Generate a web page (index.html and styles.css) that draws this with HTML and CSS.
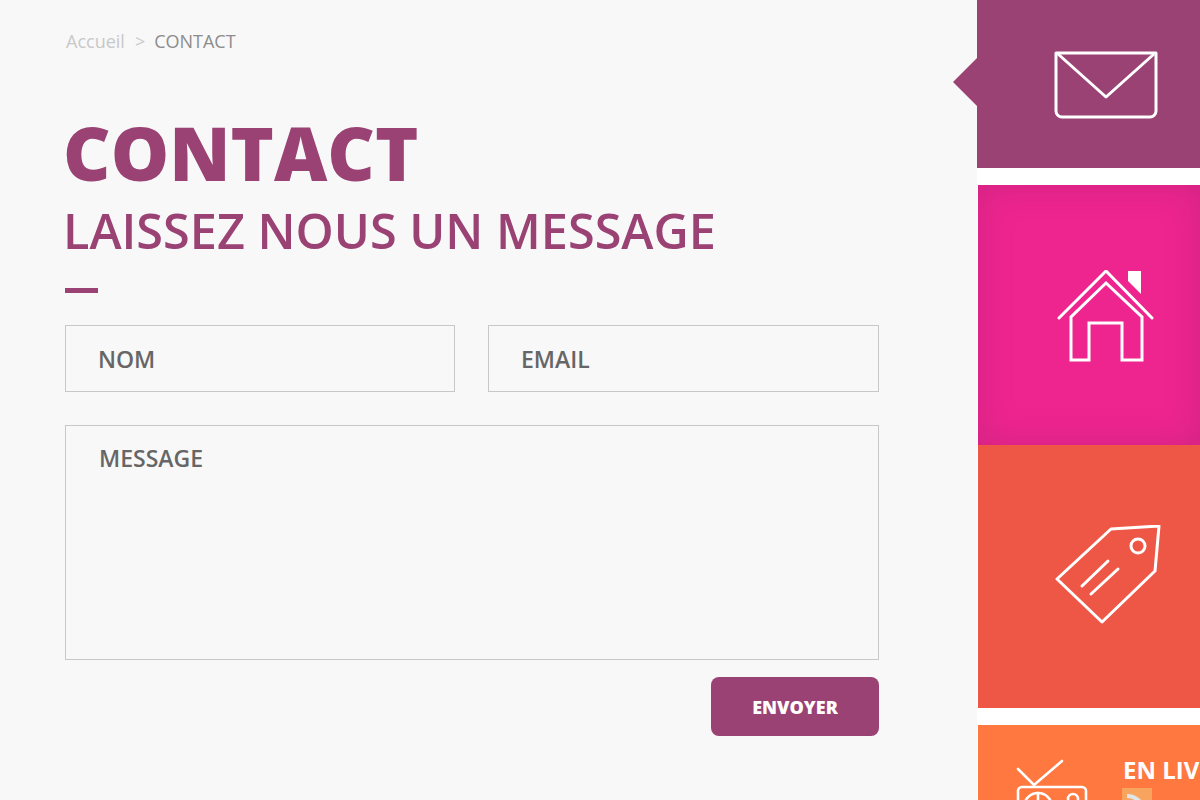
FILE: index.html
```html
<!DOCTYPE html>
<html lang="fr">
<head>
<meta charset="utf-8">
<title>Contact</title>
<link rel="stylesheet" href="styles.css">
</head>
<body>
<div class="page">
  <main class="main">
    <nav class="crumbs"><a class="crumb-link">Accueil</a><span class="crumb-sep">&gt;</span><span class="crumb-current">CONTACT</span></nav>
    <h1 class="title">CONTACT</h1>
    <h2 class="subtitle">LAISSEZ NOUS UN MESSAGE</h2>
    <div class="rule"></div>
    <form class="form">
      <div class="row">
        <input class="field" type="text" placeholder="NOM">
        <input class="field" type="text" placeholder="EMAIL">
      </div>
      <textarea class="field area" placeholder="MESSAGE"></textarea>
      <div class="actions"><button class="send" type="button">ENVOYER</button></div>
    </form>
  </main>
  <aside class="side">
    <div class="tile tile-mail">
      <svg class="icon" width="104" height="70" viewBox="0 0 104 70" fill="none" stroke="#fff" stroke-width="3" stroke-linejoin="round"><path d="M2 2H102V60a6 6 0 0 1-6 6H8a6 6 0 0 1-6-6Z"/><path d="M4 3 52 46 100 3"/></svg>
    </div>
    <div class="tile tile-home">
      <svg class="icon" width="100" height="94" viewBox="0 0 100 94" fill="none" stroke="#fff" stroke-width="3"><path d="M3 48 50 1 96 48" stroke-linecap="round"/><path d="M15 90V47L50 13 86 47V90H66V53H33V90Z"/><path d="M72 1H85V24L72 11Z" fill="#fff" stroke="none"/></svg>
    </div>
    <div class="tile tile-tag">
      <svg class="icon" width="106" height="100" viewBox="0 0 106 100" fill="none" stroke="#fff" stroke-width="3" stroke-linejoin="round" stroke-linecap="round"><path d="M2 54 56 4 104 1 100 46 47 97Z"/><circle cx="83" cy="21" r="7"/><path d="M27 61 53 36M36 69 63 44"/></svg>
    </div>
    <div class="tile tile-live">
      <svg class="tv" width="74" height="60" viewBox="0 0 74 60" fill="none" stroke="#fff" stroke-width="2.6" stroke-linecap="round"><path d="M3 9 19 25 47 1"/><rect x="3" y="27" width="68" height="40" rx="4"/><circle cx="23" cy="47" r="14"/><path d="M23 33V61"/><circle cx="58" cy="39" r="5"/></svg>
      <div class="live-text">
        <div class="live-title">EN LIVE</div>
        <div class="live-row">
          <svg class="rss" width="30" height="30" viewBox="0 0 30 30" fill="none"><rect width="30" height="30" fill="#f9a45e"/><path d="M5 8C14 8 22 15 22 25" stroke="#dfe6ea" stroke-width="4"/><path d="M5 14C11 14 16 19 16 25" stroke="#dfe6ea" stroke-width="3"/></svg>
        </div>
      </div>
    </div>
  </aside>
</div>
</body>
</html>
```
FILE: styles.css
```css
* { box-sizing: border-box; }
html, body { margin: 0; height: 100%; overflow: hidden; }
body { background: #f8f8f8; font-family: "Open Sans", sans-serif; }
.page { display: flex; height: 800px; }
.main { width: 977px; flex: none; padding: 31px 98px 0 65px; }
.crumbs { display: flex; font-size: 18px; line-height: 20px; }
.crumb-link { color: #c8c8c8; padding-left: 1px; }
.crumb-sep { color: #c8c8c8; margin: 0 10px; }
.crumb-current { color: #8c8c8c; margin-left: -1px; }
.title { margin: 62px 0 0 -2px; color: #9a4274; font-size: 73.5px; line-height: 80px; font-weight: 800; }
.subtitle { margin: 6px 0 0 -2px; color: #9a4274; font-size: 48.6px; line-height: 62px; font-weight: 600; }
.rule { width: 33px; height: 5px; background: #9a4274; margin: 27px 0 32px; }
.form { display: flex; flex-direction: column; }
.row { display: flex; justify-content: space-between; margin-bottom: 33px; }
.field { display: block; width: 391px; height: 67px; padding: 0 32px; background: transparent; border: 1px solid #c8c8c8; border-radius: 0; font: 600 23px "Open Sans", sans-serif; color: #666; outline: none; }
.row .field:first-child { width: 390px; }
.field::placeholder { color: #666; opacity: 1; }
.area { width: 814px; height: 235px; padding: 16px 33px; resize: none; }
.actions { display: flex; justify-content: flex-end; margin-top: 17px; }
.send { width: 168px; height: 59px; border: 0; border-radius: 8px; background: #9a4274; color: #fff; font: 800 18px "Open Sans", sans-serif; }
.side { width: 223px; flex: none; background: #fff; display: flex; flex-direction: column; }
.tile { flex: none; display: flex; align-items: center; justify-content: center; position: relative; }
.tile-mail { height: 168px; margin-bottom: 17px; background: #9a4274; padding: 3px 0 0 35px; }
.tile-mail::before { content: ""; position: absolute; left: -24px; top: 58px; border-style: solid; border-width: 24px 24px 24px 0; border-color: transparent #9a4274 transparent transparent; }
.tile-home { height: 260px; margin-left: 1px; background: #ee258f; box-shadow: inset 0 0 34px rgba(120, 30, 90, 0.25); padding: 4px 0 0 34px; }
.tile-tag { height: 263px; margin-left: 1px; margin-bottom: 17px; background: #ee5745; padding: 0 0 4px 38px; }
.tile-live { height: 160px; margin-left: 1px; background: #ff7840; align-items: flex-start; justify-content: flex-start; padding: 35px 0 0 37px; overflow: hidden; }
.tv { flex: none; overflow: visible; }
.live-text { margin-left: 34px; white-space: nowrap; }
.live-title { color: #fff; font-size: 24px; line-height: 20px; font-weight: 700; }
.live-row { display: flex; align-items: center; margin-top: 8px; margin-left: -1px; }
.rss { flex: none; }
```
